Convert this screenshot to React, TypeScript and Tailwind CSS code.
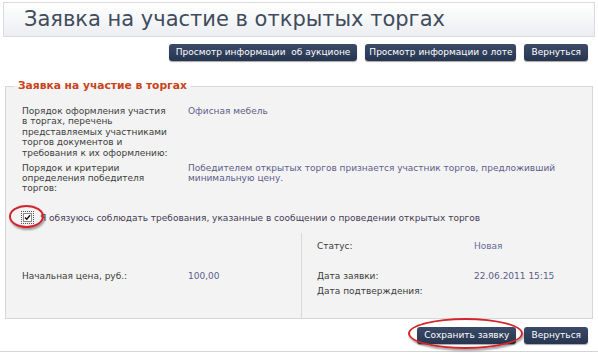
import React from 'react'

const Btn = ({ children, px = 'px-[7px]' }: { children: React.ReactNode; px?: string }) => (
  <button className={`h-[17px] ${px} rounded-[3px] bg-gradient-to-b from-[#3a4a68] to-[#27354f] text-white text-[9px] leading-[17px] shadow-[0_1px_1px_rgba(0,0,0,0.35)] whitespace-pre`}>
    {children}
  </button>
)

export default function App() {
  return (
    <div className="relative w-[598px] h-[353px] bg-white overflow-hidden font-['DejaVu_Sans',sans-serif] text-[9px] leading-[10.4px]">
      {/* page title */}
      <div className="mx-[3px] mt-[2px] h-[35px] border border-[#d9dbde] bg-gradient-to-b from-white to-[#eceef1] pl-[20px] text-[21px] leading-[33px] text-[#3f4c5c]">
        Заявка на участие в открытых торгах
      </div>

      <div className="flex justify-end gap-[8px] pr-[10px] mt-[7px]">
        <Btn>Просмотр информации  об аукционе</Btn>
        <Btn px="px-[4px]">Просмотр информации о лоте</Btn>
        <Btn>Вернуться</Btn>
      </div>

      <fieldset className="mx-[5px] mt-[18px] border border-[#d6d6d6] bg-[#f3f3f3]">
        <legend className="ml-[8px] px-[4px] text-[10.7px] leading-[14px] font-bold text-[#c8441c]">
          Заявка на участие в торгах
        </legend>

        <div className="pl-[16px] pt-[13px] flex flex-col gap-[4.6px]">
          <div className="grid grid-cols-[166px_1fr]">
            <div className="text-[#3c3c3c]">
              Порядок оформления участия<br />в торгах, перечень<br />представляемых участниками<br />торгов документов и<br />требования к их оформлению:
            </div>
            <div className="text-[#5d5d8a]">Офисная мебель</div>
          </div>
          <div className="grid grid-cols-[166px_1fr]">
            <div className="text-[#3c3c3c]">
              Порядок и критерии<br />определения победителя<br />торгов:
            </div>
            <div className="text-[#5d5d8a]">
              Победителем открытых торгов признается участник торгов, предложивший<br />минимальную цену.
            </div>
          </div>
        </div>

        <div className="flex items-center gap-[6px] pl-[15px] mt-[17px] h-[14px]">
          <span className="flex items-center justify-center w-[13px] h-[13px] border border-dotted border-[#555]">
            <span className="flex items-center justify-center w-[9px] h-[9px] border border-[#8a8a8a] bg-white">
              <svg width="7" height="7" viewBox="0 0 7 7"><path d="M1 3.5 L2.8 5.3 L6 1.2" stroke="#111" strokeWidth="1.4" fill="none" /></svg>
            </span>
          </span>
          <span className="text-[#463a56]">Я обязуюсь соблюдать требования, указанные в сообщении о проведении открытых торгов</span>
        </div>

        <div className="grid grid-cols-[279px_1fr] mt-[8px] h-[85px] ml-[16px]">
          <div className="pt-[37.8px] grid grid-cols-[166px_1fr] content-start">
            <span className="text-[#3c3c3c]">Начальная цена, руб.:</span>
            <span className="text-[#5d5d8a]">100,00</span>
          </div>
          <div className="border-l border-[#d8d8d8] pl-[15px] pt-[7.8px] flex flex-col gap-[4.6px]">
            <div className="grid grid-cols-[157px_1fr] h-[10.4px]">
              <span className="text-[#3c3c3c]">Статус:</span>
              <span className="text-[#6a6a98]">Новая</span>
            </div>
            <div className="h-[10.4px]" />
            <div className="grid grid-cols-[157px_1fr] h-[10.4px]">
              <span className="text-[#3c3c3c]">Дата заявки:</span>
              <span className="text-[#5d5d8a]">22.06.2011 15:15</span>
            </div>
            <div className="h-[10.4px] text-[#3c3c3c]">Дата подтверждения:</div>
          </div>
        </div>
      </fieldset>

      <div className="flex justify-end gap-[8px] pr-[10px] mt-[8px]">
        <Btn>Сохранить заявку</Btn>
        <Btn>Вернуться</Btn>
      </div>

      <div className="absolute left-0 right-0 top-[351px] h-px bg-[#d4d4d4]" />

      {/* red annotation marks */}
      <div className="absolute left-[9px] top-[205px] w-[35px] h-[23px] rounded-[50%] border-2 border-[#d3262c] shadow-[1px_2px_2px_rgba(0,0,0,0.35)]" />
      <div className="absolute left-[408px] top-[318px] w-[115px] h-[31px] rounded-[50%] border-2 border-[#d3262c] shadow-[1px_2px_2px_rgba(0,0,0,0.35)]" />
    </div>
  )
}
